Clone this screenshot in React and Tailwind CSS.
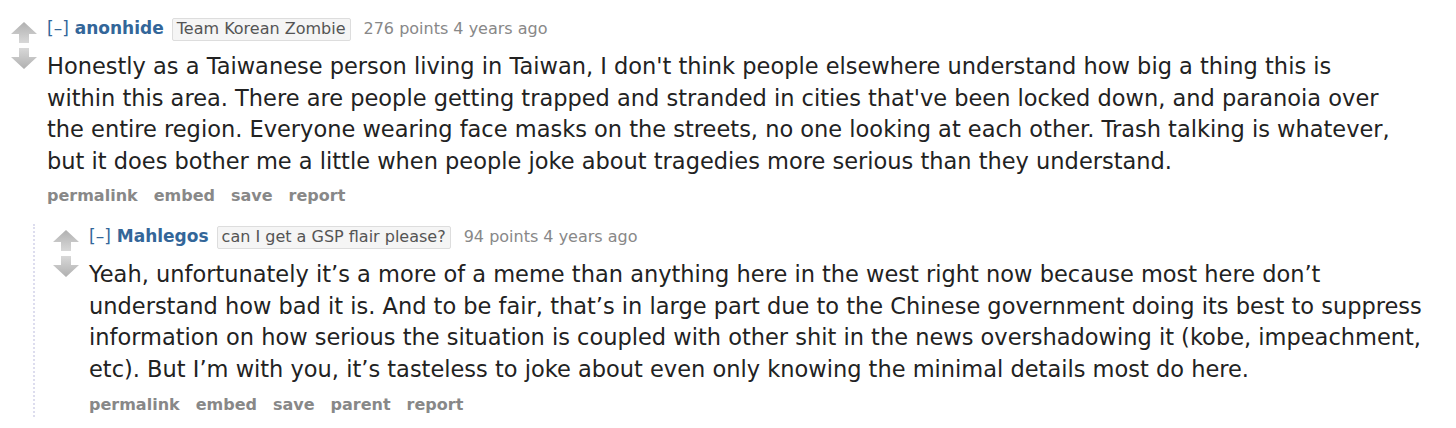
import React from "react";

const font = { fontFamily: '"DejaVu Sans", Verdana, sans-serif' };

function Arrows() {
  return (
    <div className="flex flex-col items-center gap-[5px] w-[26px] shrink-0 pt-[6px]">
      <svg width="26" height="21" viewBox="0 0 26 21">
        <defs>
          <linearGradient id="ga" x1="0" y1="0" x2="0" y2="1">
            <stop offset="0" stopColor="#b0b0b0" />
            <stop offset="1" stopColor="#d8d8d8" />
          </linearGradient>
        </defs>
        <path d="M13 0 L26 12 L18 12 L18 21 L8 21 L8 12 L0 12 Z" fill="url(#ga)" />
      </svg>
      <svg width="26" height="21" viewBox="0 0 26 21">
        <defs>
          <linearGradient id="gb" x1="0" y1="0" x2="0" y2="1">
            <stop offset="0" stopColor="#d8d8d8" />
            <stop offset="1" stopColor="#b0b0b0" />
          </linearGradient>
        </defs>
        <path d="M8 0 L18 0 L18 9 L26 9 L13 21 L0 9 L8 9 Z" fill="url(#gb)" />
      </svg>
    </div>
  );
}

function Tagline({ author, flair, points }) {
  return (
    <div className="flex items-center h-[26px] text-[17px] text-[#888]">
      <span className="text-[#369]">[–]</span>
      <span className="ml-[6px] font-bold text-[#369]">{author}</span>
      <span className="ml-[8px] px-[4px] h-[23px] flex items-center border border-[#ddd] bg-[#f5f5f5] text-[#545454] rounded-[2px] text-[16px]">
        {flair}
      </span>
      <span className="ml-[13px] text-[16px]">{points} points 4 years ago</span>
    </div>
  );
}

function Buttons({ items, className }) {
  return (
    <div className={"flex gap-[16px] text-[16px] font-bold text-[#888] " + className}>
      {items.map((b) => (
        <span key={b}>{b}</span>
      ))}
    </div>
  );
}

export default function App() {
  return (
    <div className="w-[1456px] h-[428px] bg-white overflow-hidden pl-[11px] pt-[16px] pr-[30px]" style={font}>
      <div className="flex gap-[10px]">
        <Arrows />
        <div className="flex-1 min-w-0">
          <Tagline author="anonhide" flair="Team Korean Zombie" points="276" />
          <div className="mt-[9px] text-[22.5px] leading-[31.5px] text-[#222] max-w-[1350px]">
            Honestly as a Taiwanese person living in Taiwan, I don't think people elsewhere understand how big a thing this is within this area. There are people getting trapped and stranded in cities that've been locked down, and paranoia over the entire region. Everyone wearing face masks on the streets, no one looking at each other. Trash talking is whatever, but it does bother me a little when people joke about tragedies more serious than they understand.
          </div>
          <Buttons items={["permalink", "embed", "save", "report"]} className="mt-[7px]" />
        </div>
      </div>
      <div className="ml-[22px] mt-[16px] border-l-2 border-dotted border-[#dde] pl-[18px] flex gap-[10px]">
        <Arrows />
        <div className="flex-1 min-w-0">
          <Tagline author="Mahlegos" flair="can I get a GSP flair please?" points="94" />
          <div className="mt-[9px] text-[22.5px] leading-[31.5px] text-[#222]">
            Yeah, unfortunately it’s a more of a meme than anything here in the west right now because most here don’t understand how bad it is. And to be fair, that’s in large part due to the Chinese government doing its best to suppress information on how serious the situation is coupled with other shit in the news overshadowing it (kobe, impeachment, etc). But I’m with you, it’s tasteless to joke about even only knowing the minimal details most do here.
          </div>
          <Buttons items={["permalink", "embed", "save", "parent", "report"]} className="mt-[8px]" />
        </div>
      </div>
    </div>
  );
}
